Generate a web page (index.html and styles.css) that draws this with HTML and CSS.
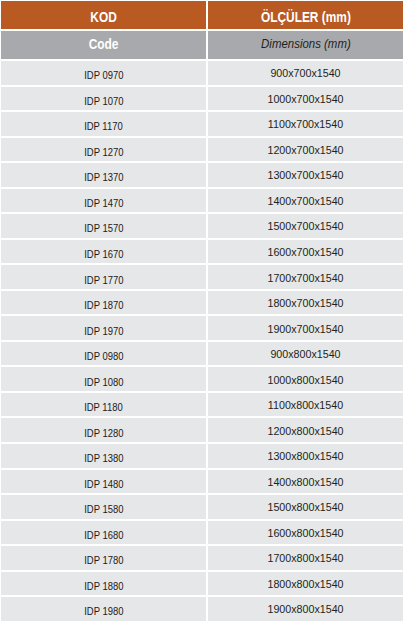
FILE: index.html
```html
<!DOCTYPE html>
<html lang="tr">
<head>
<meta charset="utf-8">
<title>IDP</title>
<link rel="stylesheet" href="styles.css">
</head>
<body>
<div class="table">
  <div class="cell head"><span class="narrow">KOD</span></div>
  <div class="cell head"><span class="narrow">ÖLÇÜLER (mm)</span></div>
  <div class="cell sub"><span class="narrow">Code</span></div>
  <div class="cell sub sub-en"><span class="narrow">Dimensions (mm)</span></div>
  <div class="cell code"><span class="narrow">IDP 0970</span></div><div class="cell dim">900x700x1540</div>
  <div class="cell code"><span class="narrow">IDP 1070</span></div><div class="cell dim">1000x700x1540</div>
  <div class="cell code"><span class="narrow">IDP 1170</span></div><div class="cell dim">1100x700x1540</div>
  <div class="cell code"><span class="narrow">IDP 1270</span></div><div class="cell dim">1200x700x1540</div>
  <div class="cell code"><span class="narrow">IDP 1370</span></div><div class="cell dim">1300x700x1540</div>
  <div class="cell code"><span class="narrow">IDP 1470</span></div><div class="cell dim">1400x700x1540</div>
  <div class="cell code"><span class="narrow">IDP 1570</span></div><div class="cell dim">1500x700x1540</div>
  <div class="cell code"><span class="narrow">IDP 1670</span></div><div class="cell dim">1600x700x1540</div>
  <div class="cell code"><span class="narrow">IDP 1770</span></div><div class="cell dim">1700x700x1540</div>
  <div class="cell code"><span class="narrow">IDP 1870</span></div><div class="cell dim">1800x700x1540</div>
  <div class="cell code"><span class="narrow">IDP 1970</span></div><div class="cell dim">1900x700x1540</div>
  <div class="cell code"><span class="narrow">IDP 0980</span></div><div class="cell dim">900x800x1540</div>
  <div class="cell code"><span class="narrow">IDP 1080</span></div><div class="cell dim">1000x800x1540</div>
  <div class="cell code"><span class="narrow">IDP 1180</span></div><div class="cell dim">1100x800x1540</div>
  <div class="cell code"><span class="narrow">IDP 1280</span></div><div class="cell dim">1200x800x1540</div>
  <div class="cell code"><span class="narrow">IDP 1380</span></div><div class="cell dim">1300x800x1540</div>
  <div class="cell code"><span class="narrow">IDP 1480</span></div><div class="cell dim">1400x800x1540</div>
  <div class="cell code"><span class="narrow">IDP 1580</span></div><div class="cell dim">1500x800x1540</div>
  <div class="cell code"><span class="narrow">IDP 1680</span></div><div class="cell dim">1600x800x1540</div>
  <div class="cell code"><span class="narrow">IDP 1780</span></div><div class="cell dim">1700x800x1540</div>
  <div class="cell code"><span class="narrow">IDP 1880</span></div><div class="cell dim">1800x800x1540</div>
  <div class="cell code"><span class="narrow">IDP 1980</span></div><div class="cell dim">1900x800x1540</div>
</div>
</body>
</html>
```
FILE: styles.css
```css
html, body {
  margin: 0;
  padding: 0;
  background: #ffffff;
}
body {
  padding: 1px 0 0 1px;
  font-family: "Liberation Sans", Arial, sans-serif;
}
.table {
  display: grid;
  grid-template-columns: 205px 195px;
  grid-template-rows: 28px 28px repeat(22, 23.54px);
  column-gap: 2px;
  row-gap: 2px;
}
.cell {
  display: flex;
  align-items: center;
  justify-content: center;
  color: #231f20;
  background: #e6e7e8;
  white-space: nowrap;
  box-sizing: border-box;
}
.narrow {
  display: inline-block;
  transform: scaleX(0.85);
}
.head {
  background: #b95a23;
  color: #ffffff;
  font-weight: bold;
  font-size: 14px;
  padding-top: 4px;
}
.sub {
  background: #a7a9ac;
  color: #ffffff;
  font-weight: bold;
  font-size: 14px;
  padding-bottom: 3px;
}
.sub-en {
  color: #231f20;
  font-weight: normal;
  font-style: italic;
  font-size: 13px;
}
.sub-en .narrow {
  transform: scaleX(0.88);
}
.code {
  font-size: 10.5px;
  padding-top: 5px;
  color: #1d1a1b;
}
.code .narrow {
  transform: scaleX(0.9);
}
.dim {
  font-size: 10.7px;
  padding-top: 1px;
}
```
